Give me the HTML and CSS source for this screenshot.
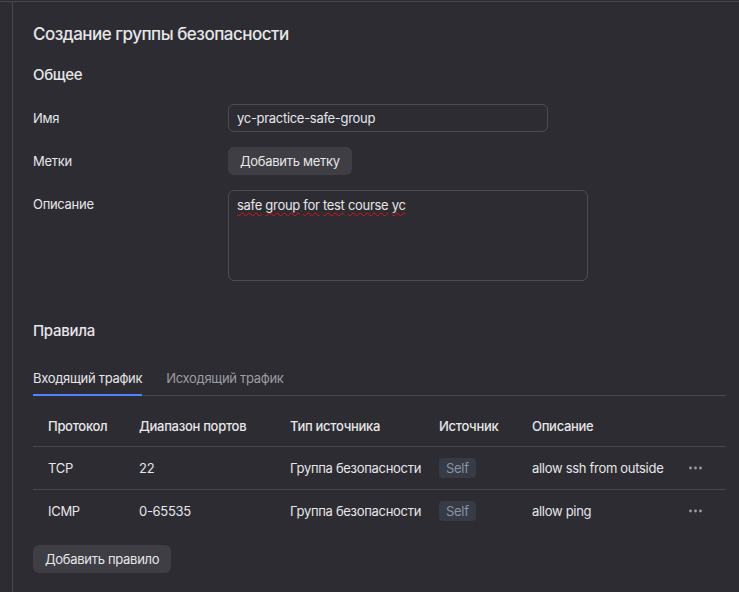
FILE: index.html
```html
<!DOCTYPE html>
<html lang="ru">
<head>
<meta charset="utf-8">
<title>Создание группы безопасности</title>
<link rel="stylesheet" href="styles.css">
</head>
<body>
<div class="shell">
  <div class="rail"></div>
  <main class="main">
    <h1 class="title">Создание группы безопасности</h1>
    <h2 class="section">Общее</h2>
    <div class="form">
      <div class="label">Имя</div>
      <div class="field"><div class="input">yc-practice-safe-group</div></div>
      <div class="label">Метки</div>
      <div class="field"><button class="btn">Добавить метку</button></div>
      <div class="label">Описание</div>
      <div class="field"><div class="textarea"><span class="typo">safe</span> <span class="typo">group</span> <span class="typo">for</span> <span class="typo">test</span> <span class="typo">course</span> <span class="typo">yc</span></div></div>
    </div>
    <h2 class="section rules">Правила</h2>
    <div class="tabs">
      <div class="tab active">Входящий трафик</div>
      <div class="tab">Исходящий трафик</div>
    </div>
    <div class="table">
      <div class="row head">
        <div class="cell">Протокол</div>
        <div class="cell">Диапазон портов</div>
        <div class="cell">Тип источника</div>
        <div class="cell">Источник</div>
        <div class="cell">Описание</div>
        <div class="cell"></div>
      </div>
      <div class="row">
        <div class="cell">TCP</div>
        <div class="cell">22</div>
        <div class="cell">Группа безопасности</div>
        <div class="cell"><span class="badge">Self</span></div>
        <div class="cell">allow ssh from outside</div>
        <div class="cell"><svg class="dots" width="16" height="4" viewBox="0 0 16 4"><circle cx="2.5" cy="2" r="1.4"/><circle cx="7.5" cy="2" r="1.4"/><circle cx="12.5" cy="2" r="1.4"/></svg></div>
      </div>
      <div class="row last">
        <div class="cell">ICMP</div>
        <div class="cell">0-65535</div>
        <div class="cell">Группа безопасности</div>
        <div class="cell"><span class="badge">Self</span></div>
        <div class="cell">allow ping</div>
        <div class="cell"><svg class="dots" width="16" height="4" viewBox="0 0 16 4"><circle cx="2.5" cy="2" r="1.4"/><circle cx="7.5" cy="2" r="1.4"/><circle cx="12.5" cy="2" r="1.4"/></svg></div>
      </div>
    </div>
    <button class="btn add-rule">Добавить правило</button>
  </main>
</div>
</body>
</html>
```
FILE: styles.css
```css
* { box-sizing: border-box; }
html, body { margin: 0; background: #2d2c33; }
body {
  padding-top: 1px;
  font-family: Inter, "Noto Sans", "Liberation Sans", sans-serif;
  font-size: 13px;
  letter-spacing: -0.3px;
  color: #e6e6e8;
  height: 592px;
  overflow: hidden;
}
.shell {
  display: flex;
  border-top: 1px solid #48474e;
  min-height: 591px;
}
.rail { width: 12px; flex: none; }
.main {
  flex: 1;
  border-left: 1px solid #48474e;
  padding: 20px 13px 0 20px;
}
.title {
  margin: 0;
  font-size: 17px;
  line-height: 24px;
  font-weight: 500;
  letter-spacing: -0.5px;
}
.section {
  margin: 19px 0 0;
  font-size: 15px;
  line-height: 20px;
  font-weight: 500;
  letter-spacing: -0.3px;
}
.form {
  margin-top: 19px;
  display: grid;
  grid-template-columns: 195px 1fr;
  row-gap: 15px;
}
.label { line-height: 28px; }
.input {
  width: 320px;
  height: 28px;
  border: 1px solid #4c4b52;
  border-radius: 6px;
  padding: 0 8px;
  line-height: 26px;
}
.btn {
  font: inherit;
  letter-spacing: inherit;
  color: #e6e6e8;
  background: #3f3e45;
  border: 0;
  border-radius: 6px;
  height: 28px;
  padding: 0 12px;
  line-height: 28px;
}
.textarea {
  width: 360px;
  height: 91px;
  border: 1px solid #4c4b52;
  border-radius: 6px;
  padding: 6px 8px;
  line-height: 16px;
}
.typo {
  text-decoration: underline wavy #e01010;
  text-decoration-skip-ink: none;
  text-underline-offset: 2px;
  text-decoration-thickness: 1px;
}
.rules { margin-top: 40px; }
.tabs {
  margin-top: 27px;
  display: flex;
  gap: 24px;
  border-bottom: 1px solid #48474e;
}
.tab {
  line-height: 20px;
  padding-bottom: 6px;
  margin-bottom: -1px;
  border-bottom: 2px solid transparent;
  color: #9c9ca2;
}
.tab.active {
  color: #e6e6e8;
  border-bottom-color: #5282ff;
}
.table { margin-top: 10px; }
.row {
  display: grid;
  grid-template-columns: 91px 151px 149px 93px 156px 52px;
  border-bottom: 1px solid #48474e;
  height: 43px;
  align-items: center;
}
.row.head { height: 41px; font-weight: 500; }
.row.last { border-bottom: 0; height: 42px; }
.cell { padding-left: 15px; white-space: nowrap; }
.badge {
  display: inline-block;
  height: 20px;
  line-height: 20px;
  padding: 0 7px;
  border-radius: 4px;
  background: #363b46;
  color: #8a93a4;
}
.dots { display: block; fill: #9a9aa0; }
.add-rule { margin-top: 13px; }
```
